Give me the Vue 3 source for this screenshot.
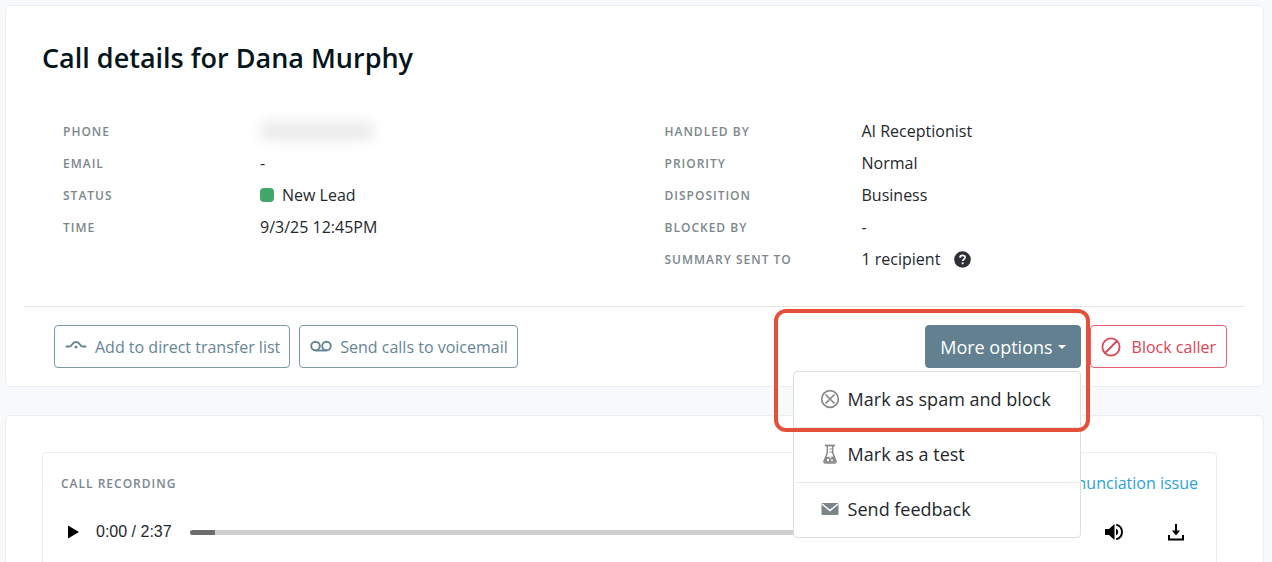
<script setup>
import { ref, computed } from 'vue'

const leftRows = [
  { label: 'Phone', kind: 'redacted' },
  { label: 'Email', value: '-' },
  { label: 'Status', value: 'New Lead', kind: 'status' },
  { label: 'Time', value: '9/3/25 12:45PM' },
]
const rightRows = [
  { label: 'Handled by', value: 'AI Receptionist' },
  { label: 'Priority', value: 'Normal' },
  { label: 'Disposition', value: 'Business' },
  { label: 'Blocked by', value: '-' },
  { label: 'Summary sent to', value: '1 recipient', kind: 'help' },
]
const columns = [leftRows, rightRows]

const menuOpen = ref(true)
const position = ref(28)
const played = computed(() => `${position.value / 10}%`)
</script>

<template>
  <main class="page">
    <section class="card">
      <h1>Call details for Dana Murphy</h1>
      <div class="details">
        <dl v-for="(rows, i) in columns" :key="i">
          <div v-for="row in rows" :key="row.label" class="row">
            <dt>{{ row.label }}</dt>
            <dd>
              <span v-if="row.kind === 'redacted'" class="redacted"></span>
              <span v-if="row.kind === 'status'" class="dot"></span>
              <span v-if="row.value">{{ row.value }}</span>
              <button v-if="row.kind === 'help'" class="help" type="button" aria-label="Help">
                <svg width="17" height="17" viewBox="0 0 17 17">
                  <circle cx="8.500" cy="8.500" r="8.300" fill="#2d3036" />
                  <path d="M6 6.700C6 5.200 7.100 4.300 8.600 4.300S11.100 5.200 11.100 6.500C11.100 8.200 8.700 8.300 8.700 10" fill="none" stroke="#fff" stroke-width="1.700" />
                  <circle cx="8.700" cy="12.300" r="1.100" fill="#fff" />
                </svg>
              </button>
            </dd>
          </div>
        </dl>
      </div>

      <div class="actions">
        <button class="btn" type="button">
          <svg class="icon" width="22" height="18" viewBox="0 0 22 18" fill="none" stroke="currentColor" stroke-width="1.900" stroke-linecap="round">
            <path d="M1.500 8.500H5C7 8.500 7 4 11 4S15 8.500 17 8.500H20.500" />
            <circle cx="11" cy="9" r="1.500" fill="currentColor" stroke="none" />
          </svg>
          Add to direct transfer list
        </button>
        <button class="btn" type="button">
          <svg class="icon" width="22" height="18" viewBox="0 0 22 18" fill="none" stroke="currentColor" stroke-width="1.900">
            <circle cx="5.500" cy="8" r="4.300" />
            <circle cx="16.500" cy="8" r="4.300" />
            <path d="M5.500 12.500H16.500" />
          </svg>
          Send calls to voicemail
        </button>

        <div class="dropdown">
          <button class="btn toggle" type="button" :aria-expanded="menuOpen" @click="menuOpen = !menuOpen">
            More options<span class="caret"></span>
          </button>
          <div v-if="menuOpen" class="menu">
            <button type="button">
              <svg width="20" height="20" viewBox="0 0 20 20" fill="none" stroke="#888" stroke-width="1.700">
                <circle cx="10" cy="10" r="8.300" />
                <path d="M5.500 5.500L14.500 14.500M14.500 5.500L5.500 14.500" />
              </svg>
              Mark as spam and block
            </button>
            <button type="button">
              <svg width="20" height="20" viewBox="0 0 20 20" fill="none" stroke="#888" stroke-width="1.400">
                <path d="M5 1.500H15" stroke-width="1.800" />
                <path d="M7.300 2V9L4 17Q3.500 19 5.500 19H14.500Q16.500 19 16 17L12.700 9V2" />
                <path d="M9.500 5H12.500M9.500 8H12.500" stroke-width="1" />
                <path d="M6 13L14 12.500L16 18.500H4Z" fill="#888" stroke="none" />
                <circle cx="8" cy="16" r="1.200" fill="#fff" stroke="none" />
                <circle cx="12" cy="16.300" r="1" fill="#fff" stroke="none" />
                <circle cx="10.500" cy="13.500" r=".9" fill="#fff" stroke="none" />
              </svg>
              Mark as a test
            </button>
            <button type="button">
              <svg width="20" height="20" viewBox="0 0 20 20">
                <rect x="1.500" y="4" width="17" height="12" rx="1" fill="#7b8487" />
                <path d="M2 5L10 11.500L18 5" fill="none" stroke="#fff" stroke-width="1.500" />
              </svg>
              Send feedback
            </button>
          </div>
          <span class="highlight"></span>
        </div>

        <button class="btn danger" type="button">
          <svg class="icon" width="20" height="20" viewBox="0 0 20 20" fill="none" stroke="currentColor" stroke-width="1.800">
            <circle cx="10" cy="10" r="8.600" />
            <path d="M4 16L16 4" />
          </svg>
          Block caller
        </button>
      </div>
    </section>

    <section class="card second">
      <div class="recording">
        <header>
          <h2>Call recording</h2>
          <a href="#">Report pronunciation issue</a>
        </header>
        <div class="player">
          <button class="play" type="button" aria-label="Play">
            <svg width="12" height="14" viewBox="0 0 12 14"><path d="M1 .5L12 7L1 13.500Z" /></svg>
          </button>
          <span class="time">0:00 / 2:37</span>
          <input v-model="position" type="range" min="0" max="1000" aria-label="Seek" :style="{ '--played': played }">
          <button type="button" aria-label="Volume">
            <svg width="20" height="20" viewBox="0 0 20 20">
              <path d="M1 7V13H5L10.500 18V2L5 7Z" />
              <path d="M12 6.500Q14.200 7.700 14.200 10T12 13.500Z" />
              <path d="M12.200 2.600Q18 4.300 18 10T12.200 17.400" fill="none" stroke="#000" stroke-width="1.900" />
            </svg>
          </button>
          <button type="button" aria-label="Download">
            <svg width="20" height="20" viewBox="0 0 20 20" fill="none" stroke="#000" stroke-width="2">
              <path d="M10 2V10M3 13V17.500H17V13" />
              <path d="M6 8.500H14L10 13.500Z" fill="#000" stroke="none" />
            </svg>
          </button>
        </div>
      </div>
    </section>
  </main>
</template>

<style>
body {
  margin: 0;
  background: #f8f9fb;
}
</style>

<style scoped>
* {
  box-sizing: border-box;
}
.page {
  display: flex;
  flex-direction: column;
  gap: 28px;
  height: 100vh;
  padding: 5px 8px 0 5px;
  overflow: hidden;
  color: #24282c;
  font-family: "Open Sans", "Noto Sans", sans-serif;
  font-size: 16px;
}
.card {
  flex-shrink: 0;
  background: #fff;
  border: 1px solid #eceef0;
  border-radius: 5px;
}
h1 {
  margin: 0;
  padding: 34px 36px 0;
  color: #04151c;
  font-size: 27px;
  font-weight: 600;
  line-height: 36px;
}
.details {
  display: flex;
  padding: 39px 26px 31px 28px;
}
dl {
  flex: 1;
  margin: 0;
  padding-left: 29px;
}
.row {
  display: flex;
  align-items: center;
  height: 32px;
}
dt,
h2 {
  color: #7b878b;
  font-size: 12px;
  font-weight: 600;
  letter-spacing: 1px;
  text-transform: uppercase;
}
dt {
  width: 197px;
}
dd {
  display: flex;
  align-items: center;
  margin: 0;
}
.redacted {
  width: 114px;
  height: 20px;
  background: #ececec;
  border-radius: 8px;
  filter: blur(6px);
}
.dot {
  width: 14px;
  height: 14px;
  margin-right: 8px;
  background: #40a768;
  border-radius: 4px;
}
button {
  padding: 0;
  color: inherit;
  background: none;
  border: 0;
  font: inherit;
  cursor: pointer;
}
svg {
  display: block;
  flex-shrink: 0;
}
.help {
  margin-left: 14px;
}
.actions {
  display: flex;
  gap: 9px;
  margin: 0 18px;
  padding: 18px 18px 18px 30px;
  border-top: 1px solid #e4e6e8;
}
.btn {
  display: flex;
  align-items: center;
  height: 43px;
  padding: 0 9px 0 10px;
  color: #668594;
  border: 1px solid #7c98a5;
  border-radius: 4px;
  white-space: nowrap;
}
.icon {
  margin-right: 8px;
}
.dropdown {
  position: relative;
  margin-left: auto;
}
.toggle {
  padding: 0 14px;
  color: #fff;
  background: #62808f;
  border-color: #62808f;
  font-size: 18px;
}
.caret {
  margin-left: 5px;
  border: 4px solid transparent;
  border-top-color: #fff;
  border-bottom: 0;
}
.danger {
  padding: 0 10px;
  color: #dc4456;
  border-color: #e4606f;
}
.danger .icon {
  margin-right: 11px;
}
.menu {
  position: absolute;
  z-index: 2;
  top: 46px;
  right: 0;
  width: 288px;
  background: #fff;
  border: 1px solid #dcdfe1;
  border-radius: 4px;
}
.menu button {
  display: flex;
  align-items: center;
  gap: 8px;
  width: 100%;
  height: 55px;
  padding: 0 0 2px 26px;
  font-size: 18px;
}
.menu button + button {
  border-top: 1px solid #e9ebed;
}
.highlight {
  position: absolute;
  z-index: 3;
  top: -16px;
  right: -9px;
  width: 316px;
  height: 123px;
  border: 4px solid #e5503a;
  border-radius: 12px;
  pointer-events: none;
}
.second {
  padding: 36px 46px 36px 36px;
}
.recording {
  padding: 18px;
  border: 1px solid #eaedef;
  border-radius: 4px;
}
header {
  display: flex;
  align-items: center;
  justify-content: space-between;
  height: 24px;
}
h2 {
  margin: 0;
}
a {
  color: #2ba3d4;
  font-size: 16px;
  text-decoration: none;
}
.player {
  display: flex;
  align-items: center;
  height: 54px;
  margin-top: 10px;
  padding: 0 12px 0 6px;
}
.play {
  margin-right: 17px;
}
.time {
  margin-right: 18px;
  font-family: "Liberation Sans", Arial, sans-serif;
  font-size: 16px;
}
input {
  flex: 1;
  height: 5px;
  margin: 0 24px 0 0;
  appearance: none;
  background: linear-gradient(#6c6c6c, #6c6c6c) 0 / var(--played) 100% no-repeat #cfcfcf;
  border-radius: 3px;
}
input::-webkit-slider-thumb {
  width: 1px;
  height: 5px;
  appearance: none;
  background: transparent;
}
.player input + button {
  margin-right: 42px;
}
</style>
